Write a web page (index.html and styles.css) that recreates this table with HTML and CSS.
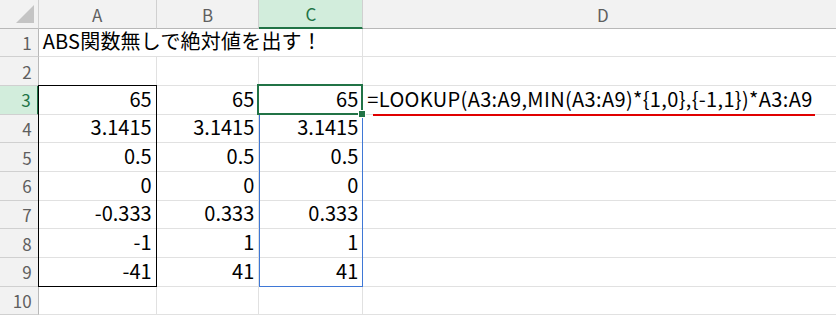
FILE: index.html
```html
<!DOCTYPE html>
<html lang="ja">
<head>
  <meta charset="UTF-8" />
  <meta name="viewport" content="width=device-width, initial-scale=1" />
  <title>ABS関数無しで絶対値を出す</title>
  <link rel="stylesheet" href="styles.css">
</head>
<body>

  <div class="sheet">
    <!-- cells -->
    <div class="grid cells">
      <div class="corner">
        <svg width="18" height="18" viewBox="0 0 18 18"><polygon points="0,18 18,18 18,0" fill="#c4c4c4" /></svg>
      </div>
      <div class="col-head">A</div>
      <div class="col-head">B</div>
      <div class="col-head active">C</div>
      <div class="col-head">D</div>

      <div class="row-head">1</div>
      <div class="cell text wide">ABS関数無しで絶対値を出す！</div>
      <div class="cell"></div>

      <div class="row-head">2</div>
      <div class="cell"></div><div class="cell"></div><div class="cell"></div><div class="cell"></div>

      <div class="row-head active">3</div>
      <div class="cell">65</div><div class="cell">65</div><div class="cell">65</div>
      <div class="cell text formula">=LOOKUP(A3:A9,MIN(A3:A9)*{1,0},{-1,1})*A3:A9</div>

      <div class="row-head">4</div>
      <div class="cell">3.1415</div><div class="cell">3.1415</div><div class="cell">3.1415</div><div class="cell"></div>

      <div class="row-head">5</div>
      <div class="cell">0.5</div><div class="cell">0.5</div><div class="cell">0.5</div><div class="cell"></div>

      <div class="row-head">6</div>
      <div class="cell">0</div><div class="cell">0</div><div class="cell">0</div><div class="cell"></div>

      <div class="row-head">7</div>
      <div class="cell">-0.333</div><div class="cell">0.333</div><div class="cell">0.333</div><div class="cell"></div>

      <div class="row-head">8</div>
      <div class="cell">-1</div><div class="cell">1</div><div class="cell">1</div><div class="cell"></div>

      <div class="row-head">9</div>
      <div class="cell">-41</div><div class="cell">41</div><div class="cell">41</div><div class="cell"></div>

      <div class="row-head">10</div>
      <div class="cell"></div><div class="cell"></div><div class="cell"></div><div class="cell"></div>
    </div>

    <!-- borders and selection drawn on top of the cells -->
    <div class="grid marks">
      <div class="range-box"></div>
      <div class="ref-box"></div>
      <div class="active-cell"><span class="fill-handle"></span></div>
      <div class="underline"></div>
    </div>
  </div>

</body>
</html>
```

FILE: styles.css
```css
:root {
  --head-bg: #f2f2f2;
  --head-line: #d0d0d0;
  --grid-line: #e1e1e1;
  --head-text: #5f5f5f;
  --green: #217346;
  --green-bg: #d2eddc;
  --blue: #3f78d6;
  --red: #e00000;
}

body {
  margin: 0;
  background: #fff;
  font-family: "Noto Sans CJK JP", "Noto Sans", sans-serif;
  overflow: hidden;
}

.sheet {
  display: grid;
}

.grid {
  grid-area: 1 / 1;
  display: grid;
  grid-template-columns: 38.67px 118px 102.67px 104px 480px;
  grid-template-rows: repeat(11, 28.67px);
}

.marks {
  pointer-events: none;
}

.corner,
.col-head,
.row-head {
  background: var(--head-bg);
  color: var(--head-text);
  border-right: 1px solid var(--head-line);
  border-bottom: 1px solid var(--head-line);
  font-size: 17px;
}

.corner {
  display: flex;
  align-items: flex-end;
  justify-content: flex-end;
  padding: 0 4px 5px 0;
  border-bottom-color: #b8b8b8;
}

.col-head {
  display: flex;
  align-items: center;
  justify-content: center;
  padding-top: 1px;
  border-bottom-color: #b8b8b8;
}

.row-head {
  display: flex;
  align-items: center;
  justify-content: flex-end;
  padding-right: 6px;
  border-right-color: #b8b8b8;
}

.col-head.active {
  background: var(--green-bg);
  color: var(--green);
  border-bottom: 2px solid var(--green);
}

.row-head.active {
  background: var(--green-bg);
  color: var(--green);
  border-right: 2px solid var(--green);
}

.cell {
  display: flex;
  align-items: flex-end;
  justify-content: flex-end;
  padding: 0 4px 3px;
  border-right: 1px solid var(--grid-line);
  border-bottom: 1px solid var(--grid-line);
  font-size: 20px;
  line-height: 24px;
  color: #000;
  white-space: nowrap;
}

.cell.text {
  justify-content: flex-start;
}

.cell.wide {
  grid-column: span 3;
  letter-spacing: 0.2px;
}

.cell.formula {
  padding-left: 4px;
  letter-spacing: 0.35px;
}

/* A3:A9 outline */
.range-box {
  grid-column: 2;
  grid-row: 4 / 11;
  margin: -1px 0 0 -1px;
  border: 1px solid #000;
}

/* C4:C9 referenced range */
.ref-box {
  grid-column: 4;
  grid-row: 5 / 11;
  border: 1px solid var(--blue);
  border-top: none;
}

.active-cell {
  grid-column: 4;
  grid-row: 4;
  position: relative;
  margin: -2px 0 0 -2px;
  border: 2px solid var(--green);
}

.fill-handle {
  position: absolute;
  right: -5px;
  bottom: -5px;
  width: 6px;
  height: 6px;
  background: var(--green);
  border: 1px solid #fff;
}

.underline {
  grid-column: 5;
  grid-row: 4;
  align-self: end;
  width: 442px;
  height: 2px;
  margin: 0 0 -1px 10px;
  background: var(--red);
}
```
